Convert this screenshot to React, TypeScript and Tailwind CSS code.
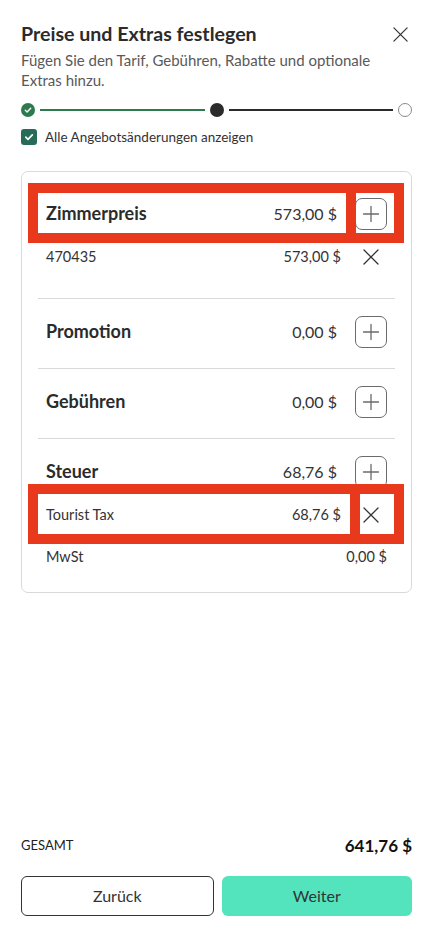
import React from "react";

const PlusIcon = () => (
  <svg width="18" height="18" viewBox="0 0 18 18" fill="none">
    <path d="M9 1.5V16.5M1.5 9H16.5" stroke="#6b6b6b" strokeWidth="1.3" strokeLinecap="round" />
  </svg>
);

const XIcon = ({ size = 18, color = "#333" }: { size?: number; color?: string }) => (
  <svg width={size} height={size} viewBox="0 0 18 18" fill="none">
    <path d="M2 2L16 16M16 2L2 16" stroke={color} strokeWidth="1.3" strokeLinecap="round" />
  </svg>
);

const PlusButton = () => (
  <button className="w-8 h-8 rounded-[7px] border border-[#6b6b6b] flex items-center justify-center bg-white">
    <PlusIcon />
  </button>
);

const Highlight = ({ divider }: { divider: number }) => (
  <div className="pointer-events-none absolute left-[-10px] top-[-10px] w-[376px] h-[60px] border-[10px] border-[#e8391d] z-10">
    <div className="absolute top-0 bottom-0 w-[10px] bg-[#e8391d]" style={{ left: divider }} />
  </div>
);

const HeaderRow = ({ label, amount, highlight }: { label: string; amount: string; highlight?: boolean }) => (
  <div className="relative flex items-center h-[41px]">
    <div className="flex-1 flex items-center justify-between px-2">
      <span className="text-[18px] font-bold text-[#2b2b2b]">{label}</span>
      <span className="text-[16px] text-[#333]">{amount}</span>
    </div>
    <div className="w-[40px] ml-[10px] flex items-center">
      <PlusButton />
    </div>
    {highlight && <Highlight divider={308} />}
  </div>
);

const SubRow = ({ label, amount, removable, highlight }: { label: string; amount: string; removable?: boolean; highlight?: boolean }) => (
  <div className="relative flex items-center h-[42px]">
    <div className="flex-1 flex items-center justify-between px-2 text-[14.5px] text-[#333]">
      <span>{label}</span>
      <span>{amount}</span>
    </div>
    {removable && (
      <div className="w-[36px] ml-[10px] flex items-center pl-[3px]">
        <XIcon />
      </div>
    )}
    {highlight && <Highlight divider={312} />}
  </div>
);

export default function App() {
  return (
    <div className="relative w-[433px] h-[929px] bg-white flex flex-col px-[21px] font-['Lato',sans-serif] text-[#333]">
      <div className="flex items-start justify-between pt-[20px]">
        <h1 className="text-[19.6px] font-bold leading-[28px] text-[#2b2b2b]">Preise und Extras festlegen</h1>
        <button className="w-6 h-6 mt-[2px] flex items-center justify-center">
          <XIcon size={17} color="#333" />
        </button>
      </div>
      <p className="mt-[2px] w-[370px] text-[15px] leading-[20px] text-[#595959]">
        Fügen Sie den Tarif, Gebühren, Rabatte und optionale Extras hinzu.
      </p>

      <div className="mt-[13px] flex items-center gap-[5px] h-[14px]">
        <div className="w-[14px] h-[14px] rounded-full bg-[#2c7a4e] flex items-center justify-center">
          <svg width="8" height="8" viewBox="0 0 8 8" fill="none">
            <path d="M1.3 4.2L3.1 5.9L6.7 2.2" stroke="white" strokeWidth="1.4" strokeLinecap="round" strokeLinejoin="round" />
          </svg>
        </div>
        <div className="flex-1 h-[2px] bg-[#2c7a4e]" />
        <div className="w-[14px] h-[14px] rounded-full bg-[#2b2b2b]" />
        <div className="flex-1 h-[2px] bg-[#2b2b2b]" />
        <div className="w-[14px] h-[14px] rounded-full border-[1.5px] border-[#8a8a8a] bg-white" />
      </div>

      <label className="mt-[10px] flex items-center h-5 gap-[8px]">
        <span className="w-4 h-4 rounded-[3px] bg-[#276b58] flex items-center justify-center">
          <svg width="10" height="10" viewBox="0 0 10 10" fill="none">
            <path d="M1.8 5.2L4 7.3L8.3 2.8" stroke="white" strokeWidth="1.7" strokeLinecap="round" strokeLinejoin="round" />
          </svg>
        </span>
        <span className="text-[13.5px] text-[#333]">Alle Angebotsänderungen anzeigen</span>
      </label>

      <div className="mt-[24px] border border-[#d9d9d9] rounded-[7px] px-4 pt-[9px]">
        <div className="pt-3 pb-5 border-b border-[#d9d9d9]">
          <HeaderRow label="Zimmerpreis" amount="573,00 $" highlight />
          <div className="pt-[2px]">
            <SubRow label="470435" amount="573,00 $" removable />
          </div>
        </div>
        <div className="pt-3 pb-4 border-b border-[#d9d9d9]">
          <HeaderRow label="Promotion" amount="0,00 $" />
        </div>
        <div className="pt-3 pb-4 border-b border-[#d9d9d9]">
          <HeaderRow label="Gebühren" amount="0,00 $" />
        </div>
        <div className="pt-3 pb-[14px]">
          <HeaderRow label="Steuer" amount="68,76 $" />
          <div className="pt-[2px]">
            <SubRow label="Tourist Tax" amount="68,76 $" removable highlight />
            <SubRow label="MwSt" amount="0,00 $" />
          </div>
        </div>
      </div>

      <div className="flex-1" />

      <div className="flex items-center justify-between h-6">
        <span className="text-[13px] text-[#222] uppercase">Gesamt</span>
        <span className="text-[17px] font-bold text-[#111]">641,76 $</span>
      </div>
      <div className="mt-[18px] mb-[13px] flex gap-2">
        <button className="flex-1 h-10 rounded-[6px] border border-[#333] bg-white text-[16px] text-[#333]">Zurück</button>
        <button className="flex-1 h-10 rounded-[6px] bg-[#53e4bd] text-[16px] text-[#333]">Weiter</button>
      </div>
    </div>
  );
}
